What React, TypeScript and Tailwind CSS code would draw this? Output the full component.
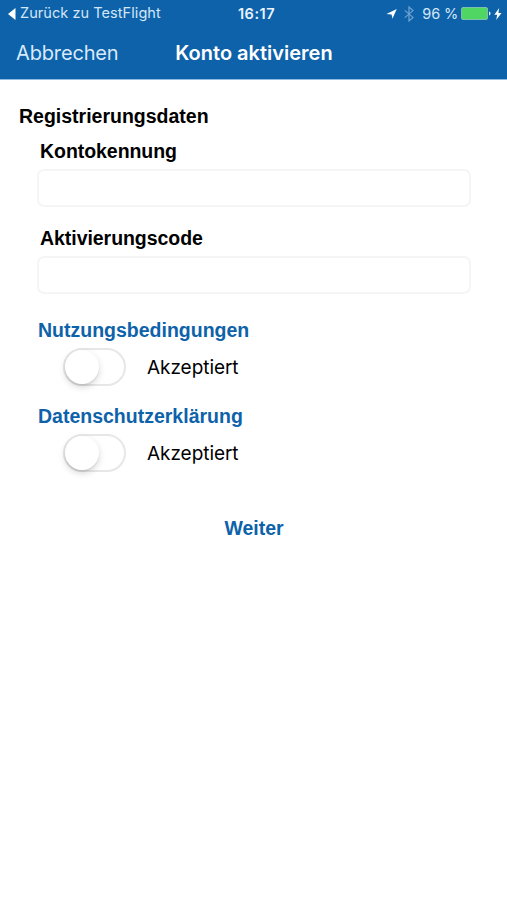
import { useState } from 'react';

function StatusBar() {
  return (
    <div className="h-[27px] grid grid-cols-[1fr_auto_1fr] items-center pl-2 pr-[5px] text-[14.5px] leading-none">
      <div className="flex items-center gap-[4px] text-[#d3e6f7]">
        <svg width="8" height="12" viewBox="0 0 8 12" fill="#fff">
          <path d="M0 6 7.5 0v12z" />
        </svg>
        <span className="tracking-[0.06px] whitespace-nowrap">Zurück zu TestFlight</span>
      </div>
      <span className="pt-px pl-[3px] font-semibold tracking-[0.5px] text-[#eaf4fd]">16:17</span>
      <div className="flex items-center justify-end text-[#d3e6f7]">
        <svg className="mr-[7px]" width="11" height="10" viewBox="0 0 11 10" fill="#fff">
          <path d="M10.8 0 6.4 9.8 5.6 5.4.4 5z" />
        </svg>
        <svg className="mr-[8px]" width="10" height="16" viewBox="0 0 10 16" fill="none" stroke="#6fa3d3" strokeWidth="1.2">
          <path d="M.8 4.4 9 11.4 5 15V1l4 3.6-8.2 7" />
        </svg>
        <span className="pt-px whitespace-nowrap mr-[3px] tracking-[-0.15px]">96 %</span>
        <svg width="31" height="13" viewBox="0 0 31 13">
          <rect x=".5" y=".5" width="26" height="12" rx="1.5" fill="#50d763" stroke="#7dbfae" />
          <path d="M28 4.5c2 .4 2 3.6 0 4z" fill="#e6f1fb" />
        </svg>
        <svg className="ml-[2px]" width="8" height="12" viewBox="0 0 8 12" fill="#fff">
          <path d="M5.2 0 .3 6.8h2.9L2.2 12l5.3-7H4.4z" />
        </svg>
      </div>
    </div>
  );
}

function Field({ label }: { label: string }) {
  return (
    <label className="block">
      <span className="block pl-[3px] h-[31px] leading-[26px] tracking-[-0.05px]">{label}</span>
      <input className="block w-full h-[38px] px-2 border-2 border-[#f5f5f5] rounded-[7px] bg-white font-normal outline-none" />
    </label>
  );
}

function Consent({ title }: { title: string }) {
  const [accepted, setAccepted] = useState(false);

  return (
    <div className="h-[86px]">
      <a className="block pl-px h-[31px] leading-[26px] text-[#0d62aa]">{title}</a>
      <div className="flex items-center pl-[26px] gap-[21px]">
        <button
          type="button"
          role="switch"
          aria-checked={accepted}
          aria-label={title}
          onClick={() => setAccepted(!accepted)}
          className={`flex w-[63px] h-[38px] rounded-full border-2 border-[#e7e7e7] ${accepted ? 'bg-[#4cd964] justify-end' : 'bg-white'}`}
        >
          <span className="w-[34px] h-[34px] rounded-full bg-white shadow-[0_3px_7px_rgba(0,0,0,0.16),0_2px_1px_rgba(0,0,0,0.06)]" />
        </button>
        <span className="pt-[2px] font-[Inter,sans-serif] font-normal text-[19px] tracking-[-0.05px] text-black">Akzeptiert</span>
      </div>
    </div>
  );
}

export default function App() {
  return (
    <div className="min-h-screen bg-white">
      {/* Header */}
      <header className="h-[80px] bg-[#0d62aa] border-b border-[#8ebce2] text-white font-[Inter,sans-serif]">
        <StatusBar />
        <nav className="h-[51px] grid grid-cols-[1fr_auto_1fr] items-center px-4">
          <button type="button" className="justify-self-start text-[20px] tracking-[-0.15px] text-[#d9eafa]">Abbrechen</button>
          <h1 className="pl-px text-[20px] font-semibold">Konto aktivieren</h1>
        </nav>
      </header>

      {/* Form */}
      <main className="pt-[23px] pl-[37px] pr-[36px] font-['Liberation_Sans',Arial,sans-serif] font-bold text-[19.5px] text-black">
        <h2 className="-ml-[18px] h-[35px] leading-[26px]">Registrierungsdaten</h2>
        <div className="flex flex-col gap-[18px]">
          <Field label="Kontokennung" />
          <Field label="Aktivierungscode" />
        </div>
        <div className="mt-[23px]">
          <Consent title="Nutzungsbedingungen" />
          <Consent title="Datenschutzerklärung" />
        </div>
        <button type="button" className="block mx-auto mt-[26px] leading-[26px] text-[#0d62aa]">Weiter</button>
      </main>
    </div>
  );
}
